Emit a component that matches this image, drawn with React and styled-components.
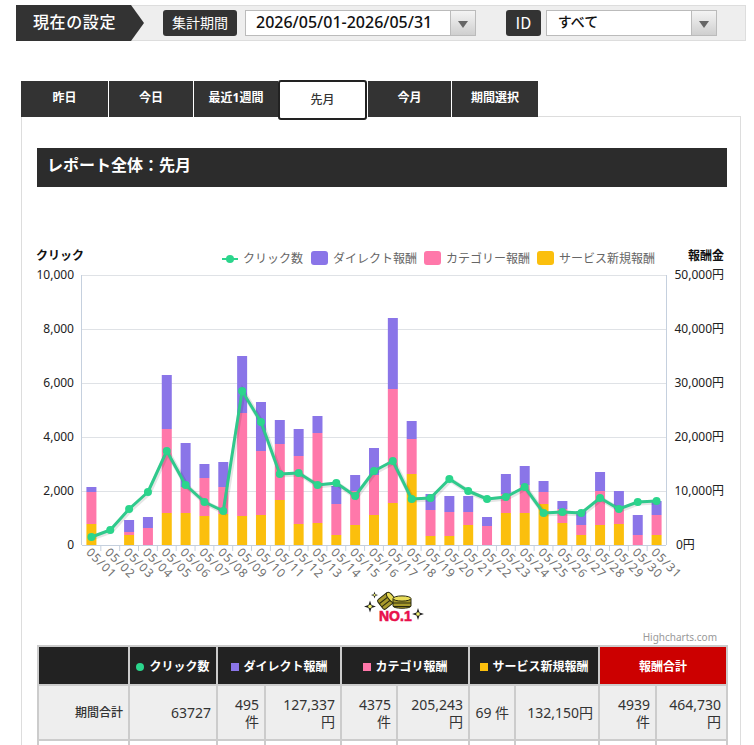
import React from 'react';
import styled, { createGlobalStyle } from 'styled-components';

const GlobalStyle = createGlobalStyle`
  html, body {
    margin: 0;
    padding: 0;
    background: #fff;
  }
  body {
    font-family: "Noto Sans", "Noto Sans CJK JP", sans-serif;
    color: #333;
  }
`;

const Page = styled.div`
  width: 754px;
  height: 745px;
  overflow: hidden;
  padding-top: 5px;
  box-sizing: border-box;
`;

const SettingsBar = styled.div`
  display: flex;
  align-items: center;
  width: 730px;
  height: 36px;
  margin-left: 16px;
  background: #eee;
  border-top: 1px solid #ddd;
  border-bottom: 1px solid #ddd;
  border-right: 1px solid #ddd;
  box-sizing: border-box;
`;

const SettingsLabel = styled.div`
  width: 128px;
  height: 36px;
  margin-top: -1px;
  margin-bottom: -1px;
  padding-left: 17px;
  box-sizing: border-box;
  background: #333;
  color: #fff;
  font-size: 16px;
  font-weight: 500;
  letter-spacing: 0.6px;
  line-height: 34px;
  clip-path: polygon(0 0, 115px 0, 128px 50%, 115px 100%, 0 100%);
`;

const FieldTag = styled.div`
  height: 26px;
  margin-left: ${(props) => props.$gap}px;
  padding: 0 ${(props) => props.$pad}px;
  background: #333;
  border-radius: 3px;
  color: #fff;
  font-family: "Noto Sans CJK JP", sans-serif;
  font-size: ${(props) => props.$size}px;
  line-height: 25px;
`;

const SelectBox = styled.div`
  display: flex;
  width: ${(props) => props.$width}px;
  height: 26px;
  margin-left: ${(props) => props.$gap}px;
  box-sizing: border-box;
  background: #fff;
  border: 1px solid #bbb;
`;

const SelectValue = styled.div`
  flex: 1;
  padding-left: ${(props) => props.$pad}px;
  color: #111;
  font-size: ${(props) => props.$size}px;
  font-weight: 500;
  line-height: 22px;
`;

const SelectArrow = styled.div`
  display: flex;
  align-items: center;
  justify-content: center;
  width: 25px;
  border-left: 1px solid #bbb;
  box-sizing: border-box;
  background: linear-gradient(#f4f4f4, #cfcfcf);

  &::after {
    content: '';
    margin-top: 2px;
    border-left: 5px solid transparent;
    border-right: 5px solid transparent;
    border-top: 7px solid #666;
  }
`;

const Tabs = styled.div`
  display: flex;
  margin: 40px 0 -1px 21px;
  height: 36px;
  position: relative;
  z-index: 1;
`;

const Tab = styled.div`
  width: ${(props) => props.$width}px;
  height: 36px;
  box-sizing: border-box;
  background: #333;
  border-left: 1px solid #fff;
  color: #fff;
  font-size: 12px;
  font-weight: 700;
  line-height: 33px;
  text-align: center;

  &:first-child {
    border-left: none;
  }
`;

const ActiveTab = styled.div`
  width: 89px;
  height: 40px;
  margin-top: -1px;
  box-sizing: border-box;
  background: #fff;
  border: 2px solid #222;
  border-radius: 3px;
  color: #333;
  font-size: 12px;
  font-weight: 500;
  line-height: 35px;
  text-align: center;
`;

const Panel = styled.div`
  width: 720px;
  margin-left: 21px;
  padding: 31px 13px 0 15px;
  box-sizing: border-box;
  border: 1px solid #ddd;
  border-bottom: none;
`;

const Heading = styled.h2`
  margin: 0;
  height: 39px;
  padding-left: 10px;
  background: #2c2c2c;
  color: #fff;
  font-size: 16px;
  font-weight: 700;
  line-height: 35px;
`;

const ChartWrap = styled.div`
  position: relative;
  height: 410px;
  margin-top: 48px;
`;

const ChartSvg = styled.svg`
  display: block;
  overflow: visible;
`;

const AwardMark = styled.svg`
  position: absolute;
  left: 323px;
  top: 351px;
`;

const ReportTable = styled.table`
  width: 691px;
  border-collapse: collapse;
  table-layout: fixed;
  font-size: 14px;
  color: #333;

  th, td {
    border: 2px solid #ccc;
    box-sizing: border-box;
  }
`;

const HeadCell = styled.th`
  height: 39px;
  padding: 0;
  background: ${(props) => (props.$red ? '#c00' : '#222')};
  color: #fff;
  font-size: 12px;
  font-weight: 700;
  text-align: center;
  white-space: nowrap;
`;

const Dot = styled.span`
  display: inline-block;
  width: 8px;
  height: 8px;
  margin-right: 5px;
  border-radius: ${(props) => (props.$round ? '50%' : '0')};
  background: ${(props) => props.$color};
`;

const Cell = styled.td`
  height: 55px;
  padding: 0 5px;
  background: ${(props) => (props.$plain ? '#fff' : '#eee')};
  line-height: 17px;
  text-align: right;
`;

const RowName = styled(Cell)`
  font-size: 12px;
  font-weight: 500;
`;

const PLOT_LEFT = 82;
const PLOT_RIGHT = 666;
const PLOT_TOP = 275;
const PLOT_BOTTOM = 545;
const STEP = (PLOT_RIGHT - PLOT_LEFT) / 31;

// y pixel of: yellow top, pink top, purple top, click marker
const days = [
  [524, 492, 487, 537],
  [545, 545, 545, 530],
  [535, 532, 520, 509],
  [545, 528, 517, 492],
  [513, 429, 375, 451],
  [513, 487, 443, 485],
  [516, 478, 464, 502],
  [514, 487, 462, 511],
  [516, 413, 356, 391],
  [515, 451, 402, 422],
  [500, 444, 420, 474],
  [524, 456, 429, 473],
  [523, 433, 416, 485],
  [535, 504, 486, 483],
  [525, 491, 475, 496],
  [515, 475, 448, 471],
  [503, 389, 318, 461],
  [474, 439, 421, 499],
  [536, 510, 494, 498],
  [536, 512, 496, 479],
  [525, 512, 496, 491],
  [545, 526, 517, 499],
  [513, 494, 474, 497],
  [513, 485, 466, 487],
  [504, 492, 481, 513],
  [523, 509, 501, 512],
  [535, 525, 511, 513],
  [525, 491, 472, 498],
  [524, 509, 491, 509],
  [545, 535, 515, 502],
  [535, 515, 501, 501],
];

const grid = [
  ['10,000', '50,000円', 275],
  ['8,000', '40,000円', 329],
  ['6,000', '30,000円', 383],
  ['4,000', '20,000円', 437],
  ['2,000', '10,000円', 491],
  ['0', '0円', 545],
];

const legend = [
  ['ダイレクト報酬', '#8a75e8', 311],
  ['カテゴリー報酬', '#ff78aa', 424],
  ['サービス新規報酬', '#fbbf0d', 537],
];

const Bars = ({ x, day }) => {
  const [yellow, pink, purple] = day;
  return (
    <g>
      <rect x={x - 5} y={purple} width="10" height={pink - purple} fill="#8a75e8" />
      <rect x={x - 5} y={pink} width="10" height={yellow - pink} fill="#ff78aa" />
      <rect x={x - 5} y={yellow} width="10" height={PLOT_BOTTOM - yellow} fill="#fbbf0d" />
    </g>
  );
};

const Chart = () => {
  const xOf = (i) => PLOT_LEFT + STEP * (i + 0.5);
  const line = days.map((d, i) => `${xOf(i)},${d[3]}`).join(' ');

  return (
    <ChartSvg width="690" height="410" viewBox="37 235 690 410" fontFamily='"Noto Sans", "Noto Sans CJK JP", sans-serif'>
      {grid.map(([left, right, y]) => (
        <g key={y}>
          <line x1={PLOT_LEFT} x2={PLOT_RIGHT} y1={y + 0.5} y2={y + 0.5} stroke="#dfe2e6" />
          <text x="74" y={y + 4} textAnchor="end" fontSize="12" fill="#222">{left}</text>
          <text x={right === '0円' ? 676 : 724} y={y + 4} textAnchor={right === '0円' ? 'start' : 'end'} fontSize="12" fill="#222">{right}</text>
        </g>
      ))}
      <line x1={PLOT_LEFT - 0.5} x2={PLOT_LEFT - 0.5} y1={PLOT_TOP} y2={PLOT_BOTTOM} stroke="#c5d0de" />
      <line x1={PLOT_RIGHT + 0.5} x2={PLOT_RIGHT + 0.5} y1={PLOT_TOP} y2={PLOT_BOTTOM} stroke="#c5d0de" />
      <line x1={PLOT_LEFT} x2={PLOT_RIGHT} y1={PLOT_BOTTOM + 0.5} y2={PLOT_BOTTOM + 0.5} stroke="#c5d0de" />

      <text x="36" y="260" fontSize="12" fontWeight="700" fill="#111">クリック</text>
      <text x="724" y="260" textAnchor="end" fontSize="12" fontWeight="700" fill="#111">報酬金</text>

      <line x1="222" x2="238" y1="259" y2="259" stroke="#2bd58c" strokeWidth="2" />
      <circle cx="230" cy="259" r="4" fill="#2bd58c" />
      <text x="243" y="263" fontSize="12" fill="#666">クリック数</text>
      {legend.map(([label, color, x]) => (
        <g key={label}>
          <rect x={x} y="251" width="17" height="14" rx="3" fill={color} />
          <text x={x + 22} y="263" fontSize="12" fill="#666">{label}</text>
        </g>
      ))}

      {days.map((day, i) => (
        <Bars key={i} x={xOf(i)} day={day} />
      ))}

      {days.map((_, i) => {
        const tick = PLOT_LEFT + STEP * i;
        return (
          <g key={i}>
            {i > 0 && <line x1={tick} x2={tick} y1={PLOT_BOTTOM} y2={PLOT_BOTTOM + 6} stroke="#c5d0de" />}
            <text
              transform={`translate(${xOf(i) - 6} 553) rotate(45)`}
              fontSize="12"
              letterSpacing="1"
              fill="#707070"
            >
              {`05/${String(i + 1).padStart(2, '0')}`}
            </text>
          </g>
        );
      })}

      <polyline points={line} fill="none" stroke="#000" strokeOpacity="0.1" strokeWidth="5" transform="translate(1 1)" />
      <polyline points={line} fill="none" stroke="#30c98c" strokeWidth="3" strokeLinejoin="round" />
      {days.map((d, i) => (
        <circle key={i} cx={xOf(i)} cy={d[3]} r="4" fill="#2bd58c" />
      ))}

      <text x="717" y="641" textAnchor="end" fontSize="10" fill="#999">Highcharts.com</text>
    </ChartSvg>
  );
};

const Star = ({ x, y, r }) => (
  <g>
    <path
      d={`M${x} ${y - r}L${x + r * 0.25} ${y - r * 0.25}L${x + r} ${y}L${x + r * 0.25} ${y + r * 0.25}L${x} ${y + r}L${x - r * 0.25} ${y + r * 0.25}L${x - r} ${y}L${x - r * 0.25} ${y - r * 0.25}Z`}
      fill="#222"
    />
    <circle cx={x} cy={y} r={r * 0.3} fill="#eef070" />
  </g>
);

const Award = () => (
  <AwardMark width="66" height="38" viewBox="360 586 66 38">
    <Star x={370} y={606.5} r={6} />
    <Star x={374.5} y={595} r={3.5} />
    <Star x={418} y={614} r={6} />
    <g transform="rotate(-38 386 601)" stroke="#2a2a10" strokeWidth="1">
      <rect x="379" y="595" width="14" height="12" rx="2" fill="#a89a2c" />
      <line x1="379" x2="393" y1="599" y2="599" />
      <line x1="379" x2="393" y1="603" y2="603" />
      <ellipse cx="392" cy="601" rx="2.6" ry="6" fill="#e8dc58" />
    </g>
    <g stroke="#2a2a10" strokeWidth="1">
      <path d="M393 599v7c0 3 18 3 18 0v-7z" fill="#a89a2c" />
      <line x1="393" x2="411" y1="603" y2="603" />
      <line x1="393" x2="411" y1="606.5" y2="606.5" />
      <ellipse cx="402" cy="598.5" rx="9" ry="2.6" fill="#e8dc58" />
    </g>
    <text x="379" y="621" fontSize="14" fontWeight="700" fill="#e8104c" stroke="#e8104c" strokeWidth="0.6" fontFamily='"Liberation Sans", sans-serif'>NO.1</text>
  </AwardMark>
);

export default function App() {
  return (
    <>
      <GlobalStyle />
      <Page>
        <SettingsBar>
          <SettingsLabel>現在の設定</SettingsLabel>
          <FieldTag $gap={19} $pad={9} $size={14}>集計期間</FieldTag>
          <SelectBox $width={231} $gap={8}>
            <SelectValue $pad={10} $size={16}>2026/05/01-2026/05/31</SelectValue>
            <SelectArrow />
          </SelectBox>
          <FieldTag $gap={30} $pad={9.5} $size={16}>ID</FieldTag>
          <SelectBox $width={171} $gap={5}>
            <SelectValue $pad={11} $size={14}>すべて</SelectValue>
            <SelectArrow />
          </SelectBox>
        </SettingsBar>

        <Tabs>
          <Tab $width={87}>昨日</Tab>
          <Tab $width={85}>今日</Tab>
          <Tab $width={85}>最近1週間</Tab>
          <ActiveTab>先月</ActiveTab>
          <Tab $width={84}>今月</Tab>
          <Tab $width={87}>期間選択</Tab>
        </Tabs>

        <Panel>
          <Heading>レポート全体：先月</Heading>
          <ChartWrap>
            <Chart />
            <Award />
          </ChartWrap>

          <ReportTable>
            <colgroup>
              <col style={{ width: 91 }} />
              <col style={{ width: 88 }} />
              <col style={{ width: 48 }} />
              <col style={{ width: 76 }} />
              <col style={{ width: 56 }} />
              <col style={{ width: 72 }} />
              <col style={{ width: 46 }} />
              <col style={{ width: 84 }} />
              <col style={{ width: 57 }} />
              <col style={{ width: 71 }} />
            </colgroup>
            <thead>
              <tr>
                <HeadCell />
                <HeadCell><Dot $color="#2bd58c" $round />クリック数</HeadCell>
                <HeadCell colSpan="2"><Dot $color="#8a75e8" />ダイレクト報酬</HeadCell>
                <HeadCell colSpan="2"><Dot $color="#ff78aa" />カテゴリ報酬</HeadCell>
                <HeadCell colSpan="2"><Dot $color="#fbbf0d" />サービス新規報酬</HeadCell>
                <HeadCell colSpan="2" $red>報酬合計</HeadCell>
              </tr>
            </thead>
            <tbody>
              <tr>
                <RowName>期間合計</RowName>
                <Cell>63727</Cell>
                <Cell>495 件</Cell>
                <Cell>127,337円</Cell>
                <Cell>4375 件</Cell>
                <Cell>205,243円</Cell>
                <Cell>69 件</Cell>
                <Cell>132,150円</Cell>
                <Cell>4939 件</Cell>
                <Cell>464,730円</Cell>
              </tr>
              <tr>
                <RowName $plain />
                <Cell $plain />
                <Cell $plain />
                <Cell $plain />
                <Cell $plain />
                <Cell $plain />
                <Cell $plain />
                <Cell $plain />
                <Cell $plain />
                <Cell $plain />
              </tr>
            </tbody>
          </ReportTable>
        </Panel>
      </Page>
    </>
  );
}
